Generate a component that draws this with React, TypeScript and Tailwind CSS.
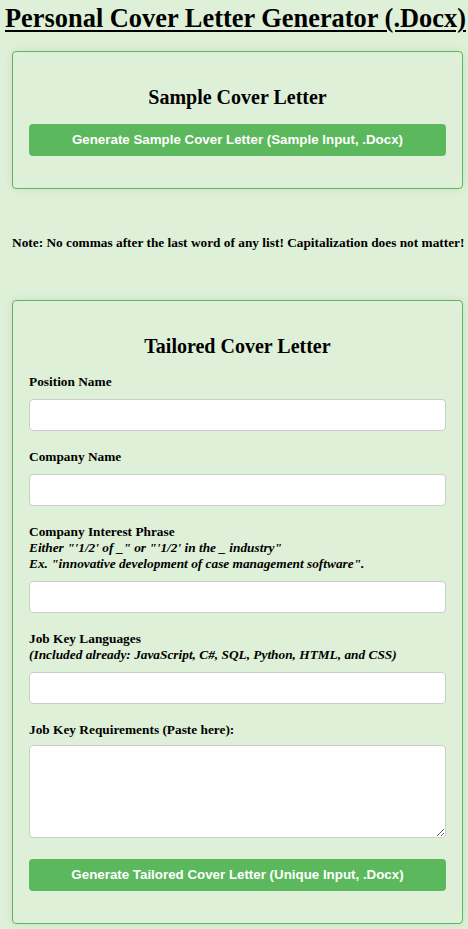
import React from 'react';

const serif = { fontFamily: '"Liberation Serif", "Times New Roman", serif' };

const Field = ({ label, hint }: { label: string; hint?: string[] }) => (
  <div className="mb-[18px]">
    <label className="block text-[13.33px] leading-[16px] font-bold">{label}</label>
    {hint?.map((h) => (
      <div key={h} className="text-[13.33px] leading-[16px] font-bold italic">
        {h}
      </div>
    ))}
    <input
      type="text"
      className="mt-[9px] block w-full h-8 bg-white border border-[#ccc] rounded px-2 text-[13px] outline-none"
    />
  </div>
);

const GreenButton = ({ children }: { children: React.ReactNode }) => (
  <button
    className="block w-full h-8 mb-4 bg-[#5cb85c] rounded text-white text-[13.33px] font-bold"
    style={{ fontFamily: '"Liberation Sans", Arial, sans-serif' }}
  >
    {children}
  </button>
);

export default function App() {
  return (
    <div className="min-h-[929px] bg-[#dff0d8] text-black overflow-hidden" style={serif}>
      {/* Page title */}
      <h1 className="pl-[5px] mt-px text-[26.4px] leading-[34px] font-bold underline decoration-2 underline-offset-[3px] whitespace-nowrap">
        Personal Cover Letter Generator (.Docx)
      </h1>

      {/* Sample card */}
      <div className="ml-3 w-[451px] mt-4 border border-[#5cb85c] rounded p-4 shadow-[0_0_10px_rgba(0,0,0,0.08)]">
        <h3 className="text-center text-[20px] leading-[23px] font-bold mt-[18px] mb-[15px]">Sample Cover Letter</h3>
        <GreenButton>Generate Sample Cover Letter (Sample Input, .Docx)</GreenButton>
      </div>

      {/* Note */}
      <p className="ml-3 mt-[46px] text-[13.33px] leading-[16px] font-bold whitespace-nowrap">
        Note: No commas after the last word of any list! Capitalization does not matter!
      </p>

      {/* Tailored card */}
      <div className="ml-3 w-[451px] mt-[49px] border border-[#5cb85c] rounded p-4 shadow-[0_0_10px_rgba(0,0,0,0.08)]">
        <h3 className="text-center text-[20px] leading-[23px] font-bold mt-[18px] mb-4">Tailored Cover Letter</h3>
        <Field label="Position Name" />
        <Field label="Company Name" />
        <Field
          label="Company Interest Phrase"
          hint={[
            'Either "\'1/2\' of _" or "\'1/2\' in the _ industry"',
            'Ex. "innovative development of case management software".',
          ]}
        />
        <Field label="Job Key Languages" hint={['(Included already: JavaScript, C#, SQL, Python, HTML, and CSS)']} />
        <div className="mb-[21px]">
          <label className="block text-[13.33px] leading-[16px] font-bold">Job Key Requirements (Paste here):</label>
          <textarea className="mt-[7px] block w-full h-[93px] bg-white border border-[#ccc] rounded px-2 text-[13px] outline-none" />
        </div>
        <GreenButton>Generate Tailored Cover Letter (Unique Input, .Docx)</GreenButton>
      </div>
    </div>
  );
}
